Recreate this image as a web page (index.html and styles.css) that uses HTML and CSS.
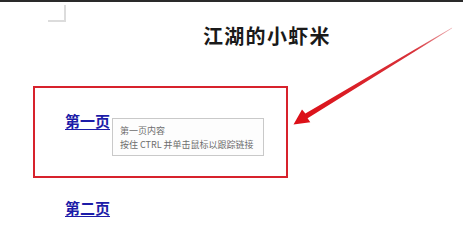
FILE: index.html
```html
<!DOCTYPE html>
<html lang="zh">
<head>
<meta charset="utf-8">
<link rel="stylesheet" href="styles.css">
</head>
<body>
<div class="topbar"></div>
<div class="page">
  <div class="corner"></div>
  <h1 class="title">江湖的小虾米</h1>
  <div class="highlight">
    <span class="link-wrap">
      <a class="link" href="#p1">第一页</a>
      <span class="tooltip">
        <span class="tip-line">第一页内容</span>
        <span class="tip-line">按住 CTRL 并单击鼠标以跟踪链接</span>
      </span>
    </span>
  </div>
  <a class="link link-second" href="#p2">第二页</a>
</div>
<svg class="arrow" width="463" height="241" viewBox="0 0 463 241">
  <defs>
    <linearGradient id="ag" x1="452" y1="28" x2="300" y2="118" gradientUnits="userSpaceOnUse">
      <stop offset="0" stop-color="#ecaeb1"/>
      <stop offset="0.25" stop-color="#d8323a"/>
      <stop offset="1" stop-color="#dc1018"/>
    </linearGradient>
  </defs>
  <polygon fill="url(#ag)" points="452.2,27.6 451.8,28.4 307.6,118.2 310.3,122.2 293.5,124.5 302.0,109.6 305.4,113.6"/>
</svg>
</body>
</html>
```
FILE: styles.css
```css
html, body {
  margin: 0;
  padding: 0;
  background: #ffffff;
}
body {
  width: 463px;
  height: 241px;
  overflow: hidden;
  position: relative;
  font-family: "Liberation Serif", "Noto Sans CJK SC", serif;
}
.topbar {
  height: 2px;
  background: #2a2a2a;
}
.page {
  display: flex;
  flex-direction: column;
  align-items: flex-start;
}
.corner {
  margin: 3px 0 0 48px;
  width: 16px;
  height: 15px;
  border-right: 2px solid #dcdcdc;
  border-bottom: 2px solid #dcdcdc;
}
.title {
  margin: 2px 0 0 203px;
  font-family: "Noto Sans CJK SC", sans-serif;
  font-size: 20px;
  line-height: 24px;
  font-weight: 700;
  color: #1a1a1a;
  letter-spacing: 1.3px;
}
.highlight {
  margin: 38px 0 0 33px;
  width: 251px;
  height: 88px;
  border: 2px solid #d7222c;
  box-sizing: content-box;
  padding: 0;
}
.link-wrap {
  position: relative;
  display: inline-block;
  margin: 24px 0 0 30px;
}
.link {
  font-family: "Noto Sans CJK SC", sans-serif;
  font-size: 15px;
  line-height: 18px;
  font-weight: 700;
  color: #1c1ca8;
  text-decoration: underline;
  text-underline-offset: 2px;
  display: inline-block;
}
.tooltip {
  position: absolute;
  left: 47px;
  top: 6px;
  width: 152px;
  height: 38px;
  border: 1px solid #c9c9c9;
  background: #fdfdfd;
  display: flex;
  flex-direction: column;
  padding: 5px 0 0 7px;
  box-sizing: border-box;
  white-space: nowrap;
}
.tip-line {
  font-family: "Noto Sans CJK SC", sans-serif;
  font-size: 9px;
  line-height: 14px;
  color: #6e6e6e;
}
.link-second {
  margin: 21px 0 0 65px;
}
.arrow {
  position: absolute;
  left: 0;
  top: 0;
}
```
